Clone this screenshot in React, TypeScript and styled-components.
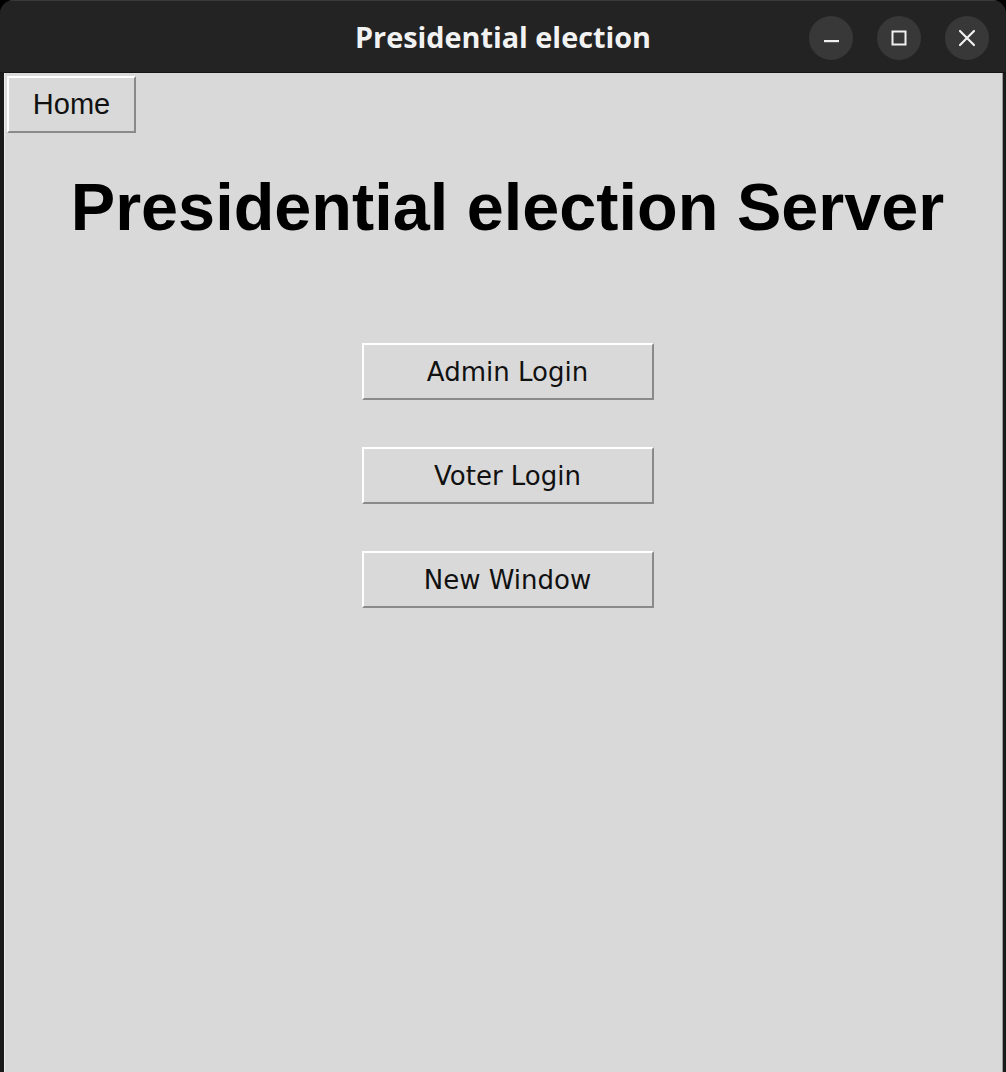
import React from "react";
import styled, { createGlobalStyle } from "styled-components";

const GlobalStyle = createGlobalStyle`
  html, body {
    margin: 0;
    padding: 0;
    background: #000;
  }
  #root {
    height: 1072px;
  }
`;

const Frame = styled.div`
  width: 1006px;
  height: 1072px;
  display: flex;
  flex-direction: column;
  background: #1a1a1a;
  border-radius: 14px 14px 0 0;
  overflow: hidden;
  box-sizing: border-box;
  padding: 0 3px 0 4px;
`;

const TitleBar = styled.div`
  height: 73px;
  flex: none;
  display: flex;
  align-items: center;
  justify-content: center;
  position: relative;
  background: #232323;
  margin: 0 -3px 0 -4px;
  border-top: 1px solid #3a3a3a;
  border-bottom: 1px solid #141414;
  box-sizing: border-box;
`;

const Title = styled.div`
  font-family: "Open Sans", "DejaVu Sans", sans-serif;
  font-weight: 700;
  font-size: 28.8px;
  color: #f2f2f2;
`;

const Controls = styled.div`
  position: absolute;
  right: 17px;
  top: 15px;
  display: flex;
  gap: 24px;
`;

const WinButton = styled.div`
  width: 44px;
  height: 44px;
  border-radius: 50%;
  background: #383838;
  display: flex;
  align-items: center;
  justify-content: center;
`;

const Content = styled.div`
  flex: 1;
  background: #d9d9d9;
  display: flex;
  flex-direction: column;
  border-left: 1px solid #ececec;
  border-right: 1px solid #9a9a9a;
`;

const TkButton = styled.button<{ $wide?: boolean }>`
  box-sizing: border-box;
  width: ${(p) => (p.$wide ? "292px" : "129px")};
  height: 57px;
  background: #d9d9d9;
  border-style: solid;
  border-width: 2px;
  border-color: #ffffff #8a8a8a #8a8a8a #ffffff;
  padding: 0;
  font-family: ${(p) =>
    p.$wide ? `"DejaVu Sans", sans-serif` : `"Liberation Sans", Arial, sans-serif`};
  font-size: ${(p) => (p.$wide ? "26px" : "29px")};
  color: #111;
  cursor: default;
`;

const HomeRow = styled.div`
  padding: 3px 0 0 2px;
  display: flex;
`;

const Heading = styled.h1`
  margin: 36px 0 0 0;
  padding-left: 8px;
  text-align: center;
  font-family: "Liberation Sans", Arial, sans-serif;
  font-weight: 700;
  font-size: 66.6px;
  line-height: 76px;
  color: #000;
`;

const Menu = styled.div`
  margin-top: 98px;
  display: flex;
  flex-direction: column;
  align-items: center;
  gap: 47px;
  padding-left: 8px;
`;

export default function App() {
  return (
    <>
      <GlobalStyle />
      <Frame>
        <TitleBar>
          <Title>Presidential election</Title>
          <Controls>
            <WinButton>
              <svg width="18" height="18" viewBox="0 0 18 18">
                <rect x="2" y="11" width="15" height="2.2" fill="#f0f0f0" />
              </svg>
            </WinButton>
            <WinButton>
              <svg width="18" height="18" viewBox="0 0 18 18">
                <rect x="2.5" y="2.5" width="13" height="13" fill="none" stroke="#f0f0f0" strokeWidth="2" />
              </svg>
            </WinButton>
            <WinButton>
              <svg width="18" height="18" viewBox="0 0 18 18">
                <path d="M2 2 L16 16 M16 2 L2 16" stroke="#f0f0f0" strokeWidth="2.2" strokeLinecap="round" />
              </svg>
            </WinButton>
          </Controls>
        </TitleBar>
        <Content>
          <HomeRow>
            <TkButton>Home</TkButton>
          </HomeRow>
          <Heading>Presidential election Server</Heading>
          <Menu>
            <TkButton $wide>Admin Login</TkButton>
            <TkButton $wide>Voter Login</TkButton>
            <TkButton $wide>New Window</TkButton>
          </Menu>
        </Content>
      </Frame>
    </>
  );
}
